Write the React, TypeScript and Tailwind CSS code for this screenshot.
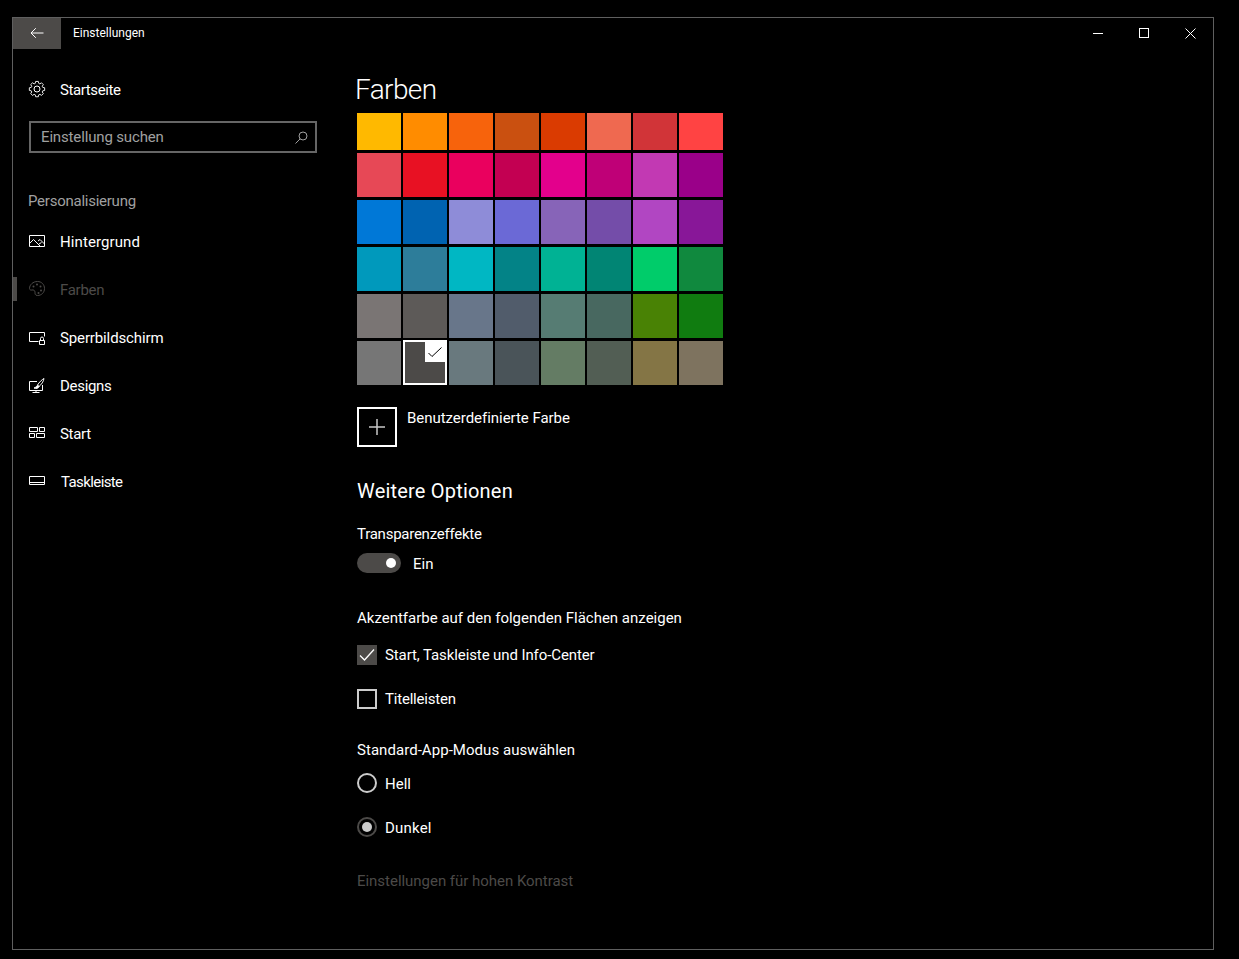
import type { ReactNode } from 'react';

const SWATCHES = [
  '#ffb900', '#ff8c00', '#f7630c', '#ca5010', '#da3b01', '#ef6950', '#d13438', '#ff4343',
  '#e74856', '#e81123', '#ea005e', '#c30052', '#e3008c', '#bf0077', '#c239b3', '#9a0089',
  '#0078d7', '#0063b1', '#8e8cd8', '#6b69d6', '#8764b8', '#744da9', '#b146c2', '#881798',
  '#0099bc', '#2d7d9a', '#00b7c3', '#038387', '#00b294', '#018574', '#00cc6a', '#10893e',
  '#7a7574', '#5d5a58', '#68768a', '#515c6b', '#567c73', '#486860', '#498205', '#107c10',
  '#767676', '#4c4a48', '#69797e', '#4a5459', '#647c64', '#525e54', '#847545', '#7e735f',
];

const SELECTED = 41;

function Icon({ children }: { children: ReactNode }) {
  return (
    <svg width="18" height="18" viewBox="0 0 18 18" fill="none" stroke="currentColor" strokeWidth="1" className="shrink-0">
      {children}
    </svg>
  );
}

const GearIcon = () => (
  <Icon>
    <path d="M7.5 1.500h3l.4 2.100 1.300.6 1.800-1.200 2 2-1.200 1.800.6 1.300 2.100.4v3l-2.100.4-.6 1.300 1.200 1.800-2 2-1.800-1.200-1.300.6-.4 2.100h-3l-.4-2.100-1.300-.6-1.800 1.200-2-2 1.200-1.800-.6-1.300-2.100-.4v-3l2.100-.4.6-1.300-1.200-1.800 2-2 1.800 1.200 1.300-.6z" transform="translate(.9 .1) scale(.9)" />
    <circle cx="9" cy="9" r="3" />
  </Icon>
);

const PictureIcon = () => (
  <Icon>
    <path d="M1.500 3.500h15v11h-15z" />
    <path d="M1.500 11.500l4-4 7 7M10 9l2-1.500 4.500 4.500M11 12l2.500-1.500" />
  </Icon>
);

const PaletteIcon = () => (
  <Icon>
    <path d="M9.500 1.500c-4.500 0-8 3.200-8 7 0 1.400 1.400 1.800 2.500 1.500 1.600-.4 3 .5 3 2.200 0 1.200-.2 3.300 2.500 3.300 4 0 7-3 7-7s-3-7-7-7z" />
    <circle cx="5.500" cy="6.500" r="1" fill="currentColor" stroke="none" />
    <circle cx="9" cy="4.500" r="1" fill="currentColor" stroke="none" />
    <circle cx="12.500" cy="6.500" r="1" fill="currentColor" stroke="none" />
    <circle cx="13" cy="10.500" r="1" fill="currentColor" stroke="none" />
    <circle cx="10.500" cy="13" r="1" fill="currentColor" stroke="none" />
  </Icon>
);

const LockIcon = () => (
  <Icon>
    <path d="M10.500 13.500h-9v-9h15v4" />
    <path d="M11.500 12.500h5v4h-5zM12.500 12.500v-2a1.500 1.500 0 0 1 3 0v2" />
  </Icon>
);

const ThemeIcon = () => (
  <Icon>
    <path d="M9 5.500H1.500v9h13V9M8 14.500v2M4.500 16.500h7" />
    <path d="M16 2.500c-2 1-5 4-6.500 6.500l1.500 1.500c2.500-2 4.500-5 5-8z" />
    <path d="M9.500 9.500c-1.500.5-1 2-3.500 2.500 2 .8 4.500.5 5-1.500z" fill="currentColor" />
  </Icon>
);

const StartIcon = () => (
  <Icon>
    <path d="M1.500 3.500h8v4h-8zM11.500 3.500h5v4h-5zM1.500 9.500h5v4h-5zM8.500 9.500h8v4h-8z" />
  </Icon>
);

const TaskbarIcon = () => (
  <Icon>
    <path d="M1.500 4.500h15v8h-15zM1.500 10.500h15" />
  </Icon>
);

const NAV = [
  { label: 'Hintergrund', icon: <PictureIcon />, text: 'tracking-[0.1px]' },
  { label: 'Farben', icon: <PaletteIcon />, text: 'tracking-[-0.3px]', active: true },
  { label: 'Sperrbildschirm', icon: <LockIcon />, text: 'tracking-[-0.13px]' },
  { label: 'Designs', icon: <ThemeIcon />, text: 'tracking-[-0.3px]' },
  { label: 'Start', icon: <StartIcon />, text: 'tracking-[-0.3px]' },
  { label: 'Taskleiste', icon: <TaskbarIcon />, text: 'ml-px tracking-[-0.6px]' },
];

// Roboto sits a pixel higher than the screenshot's font in a 20px line
function Label({ className = '', children }: { className?: string; children: ReactNode }) {
  return <span className={`block h-[20px] pt-px ${className}`}>{children}</span>;
}

function Swatch({ color, selected }: { color: string; selected: boolean }) {
  if (!selected) return <div className="h-full w-full" style={{ backgroundColor: color }} />;
  return (
    <div className="relative -mt-px h-[45px] w-full border-2 border-white" style={{ backgroundColor: color }}>
      <div className="absolute right-0 top-0 flex h-5 w-5 items-center justify-center bg-white">
        <svg width="14" height="14" viewBox="0 0 14 14" fill="none" stroke="#000" strokeWidth="1">
          <path d="M.5 8L4 11.500l9.500-9" />
        </svg>
      </div>
    </div>
  );
}

export default function App() {
  return (
    <div className="h-[959px] w-[1239px] overflow-hidden bg-black pl-[12px] pt-[17px] font-['Roboto',sans-serif] text-[15px] leading-[20px] text-white">
      <div className="h-[933px] w-[1202px] border border-[#5f5f5f]">
        {/* Title bar */}
        <div className="flex h-[31px] items-stretch">
          <div className="flex w-[48px] items-center justify-center bg-[#4c4a48] pb-[2px]">
            <svg width="14" height="14" viewBox="0 0 14 14" fill="none" stroke="#fff" strokeWidth="1">
              <path d="M13.500 7H1M5.800 2.200L1 7l4.800 4.800" />
            </svg>
          </div>
          <div className="ml-[12px] flex items-center pb-[2px] text-[12px]">Einstellungen</div>
          <div className="ml-auto flex pb-px">
            <div className="flex w-[46px] items-center justify-center">
              <div className="h-px w-[10px] bg-white" />
            </div>
            <div className="flex w-[46px] items-center justify-center">
              <div className="h-[10px] w-[10px] border border-white" />
            </div>
            <div className="flex w-[46px] items-center justify-center">
              <svg width="11" height="11" viewBox="0 0 11 11" stroke="#fff" strokeWidth="1">
                <path d="M.5.500l10 10M10.500.500l-10 10" />
              </svg>
            </div>
          </div>
        </div>

        <div className="flex">
          {/* Sidebar */}
          <aside className="w-[344px] shrink-0 pt-[20px]">
            <div className="flex h-[40px] items-center gap-[14px] pl-[15px]">
              <GearIcon />
              <Label className="tracking-[-0.4px]">Startseite</Label>
            </div>
            <div className="ml-[16px] mt-[12px] flex h-[32px] w-[288px] items-center justify-between border-2 border-[#666666] pl-[10px] pr-[7px] text-[#a0a0a0]">
              <span className="tracking-[-0.15px]">Einstellung suchen</span>
              <svg width="13" height="13" viewBox="0 0 13 13" fill="none" stroke="currentColor" strokeWidth="1">
                <circle cx="8" cy="5" r="4" />
                <path d="M5.200 7.800L.5 12.500" />
              </svg>
            </div>
            <div className="ml-[15px] mt-[38px] tracking-[-0.25px] text-[#a0a0a0]">Personalisierung</div>
            <nav className="mt-[6px]">
              {NAV.map((item) => (
                <div
                  key={item.label}
                  className={`relative flex h-[48px] items-center gap-[14px] pl-[15px] ${item.active ? 'text-[#4c4a48]' : ''}`}
                >
                  {item.active && <div className="absolute left-0 top-[12px] h-[24px] w-[4px] bg-[#4c4a48]" />}
                  {item.icon}
                  <Label className={item.text}>{item.label}</Label>
                </div>
              ))}
            </nav>
          </aside>

          {/* Content */}
          <main className="pt-[20px]">
            <h1 className="-ml-[2px] h-[40px] pt-px text-[28px] font-light leading-[40px] tracking-[-0.6px]">Farben</h1>
            <div className="mt-[4px] grid w-[366px] grid-cols-[repeat(8,44px)] grid-rows-[37px_44px_44px_44px_44px_44px] gap-x-[2px] gap-y-[3px]">
              {SWATCHES.map((color, i) => (
                <Swatch key={color + i} color={color} selected={i === SELECTED} />
              ))}
            </div>

            <div className="mt-[22px] flex items-start gap-[10px]">
              <div className="flex h-[40px] w-[40px] items-center justify-center border-2 border-white">
                <svg width="16" height="16" viewBox="0 0 16 16" stroke="#c8c8c8" strokeWidth="1.500">
                  <path d="M8 0v16M0 8h16" />
                </svg>
              </div>
              <Label className="tracking-[-0.04px]">Benutzerdefinierte Farbe</Label>
            </div>

            <h2 className="mt-[30px] h-[28px] text-[20px] leading-[28px] tracking-[0.2px]">Weitere Optionen</h2>

            <Label className="mt-[18px] tracking-[-0.25px]">Transparenzeffekte</Label>
            <div className="mt-[10px] flex items-center gap-[12px]">
              <div className="flex h-[20px] w-[44px] items-center justify-end rounded-full bg-[#4c4a48] pr-[5px]">
                <div className="h-[10px] w-[10px] rounded-full bg-white" />
              </div>
              <Label>Ein</Label>
            </div>

            <Label className="mt-[34px]">Akzentfarbe auf den folgenden Flächen anzeigen</Label>
            <div className="mt-[18px] flex items-center gap-[8px]">
              <div className="flex h-[20px] w-[20px] items-center justify-center bg-[#4c4a48]">
                <svg width="16" height="16" viewBox="0 0 16 16" fill="none" stroke="#fff" strokeWidth="1.300">
                  <path d="M1 8.500l4.500 4.500L15 2.500" />
                </svg>
              </div>
              <span className="tracking-[-0.1px]">Start, Taskleiste und Info-Center</span>
            </div>
            <div className="mt-[24px] flex items-center gap-[8px]">
              <div className="h-[20px] w-[20px] border-2 border-[#cccccc]" />
              <span className="tracking-[-0.2px]">Titelleisten</span>
            </div>

            <Label className="mt-[30px] tracking-[0.05px]">Standard-App-Modus auswählen</Label>
            <div className="mt-[14px] flex items-center gap-[8px]">
              <div className="h-[20px] w-[20px] rounded-full border-2 border-[#cccccc]" />
              <Label>Hell</Label>
            </div>
            <div className="mt-[24px] flex items-center gap-[8px]">
              <div className="flex h-[20px] w-[20px] items-center justify-center rounded-full border-2 border-[#4c4a48]">
                <div className="h-[10px] w-[10px] rounded-full bg-[#cccccc]" />
              </div>
              <Label className="tracking-[0.2px]">Dunkel</Label>
            </div>

            <Label className="mt-[33px] tracking-[-0.03px] text-[#4c4a48]">Einstellungen für hohen Kontrast</Label>
          </main>
        </div>
      </div>
    </div>
  );
}
